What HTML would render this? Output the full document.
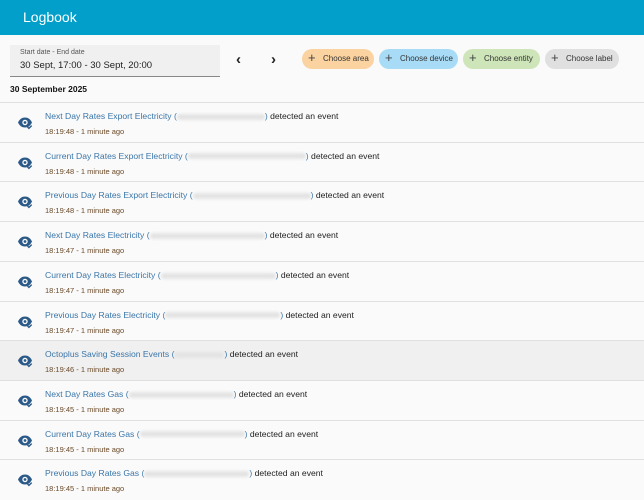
<!DOCTYPE html>
<html><head><style>
body{margin:0;width:644px;height:500px;overflow:hidden;background:#fafafa;font-family:"Liberation Sans",sans-serif;}
.hdr{height:35px;background:#039fcb;color:#fff;font-size:14px;line-height:35px;padding-left:23px;}
.df{position:absolute;left:10px;top:45px;width:210px;height:31px;background:#f0f0f0;border-bottom:1px solid #888;}
.df .l{position:absolute;left:10px;top:4px;font-size:7px;color:#555;}
.df .v{position:absolute;left:10px;top:15px;font-size:9.5px;color:#222;}
.arr{position:absolute;top:51px;font-size:15px;color:#222;font-weight:bold;}
.chip{position:absolute;top:49px;height:20px;border-radius:10px;font-size:8px;color:#333;line-height:20px;padding-left:21px;box-sizing:border-box;white-space:nowrap;}
.chip:before{content:"+";position:absolute;left:6px;top:-1px;font-size:13px;color:#444;}
.date{position:absolute;left:10px;top:84px;font-size:8.5px;font-weight:bold;color:#111;}
.row{position:absolute;left:0;width:644px;height:39px;border-top:1px solid #e0e0e0;}
.row.hl{background:#f0f0f0;}
.t{position:absolute;left:45px;top:8px;font-size:8.6px;color:#222;white-space:nowrap;}
.t a{color:#3a75a8;}
.b{display:inline-block;height:6px;background:#e4e4e4;border-radius:3px;vertical-align:middle;filter:blur(1.2px);}
.s{position:absolute;left:45px;top:24px;font-size:7.5px;color:#6b4b2a;}
.ic{position:absolute;left:17px;top:13px;}
</style></head><body>
<div class="hdr">Logbook</div>
<div class="df"><div class="l">Start date - End date</div><div class="v">30 Sept, 17:00 - 30 Sept, 20:00</div></div>
<div class="arr" style="left:236px">‹</div><div class="arr" style="left:271px">›</div>
<div class="chip" style="left:302px;width:72px;background:#fbd3a0">Choose area</div>
<div class="chip" style="left:379px;width:79px;background:#a8dcf6">Choose device</div>
<div class="chip" style="left:463px;width:77px;background:#cde5b8">Choose entity</div>
<div class="chip" style="left:545px;width:74px;background:#e0e0e0">Choose label</div>
<div class="date">30 September 2025</div>
<div id="rows"></div>
<script>
var d=[["Next Day Rates Export Electricity",88,"18:19:48"],["Current Day Rates Export Electricity",118,"18:19:48"],["Previous Day Rates Export Electricity",118,"18:19:48"],["Next Day Rates Electricity",115,"18:19:47"],["Current Day Rates Electricity",115,"18:19:47"],["Previous Day Rates Electricity",115,"18:19:47"],["Octoplus Saving Session Events",50,"18:19:46"],["Next Day Rates Gas",105,"18:19:45"],["Current Day Rates Gas",105,"18:19:45"],["Previous Day Rates Gas",105,"18:19:45"]];
var h="";
var ic='<svg class="ic" width="16" height="14" viewBox="0 0 16 14"><path d="M1 6.5C2.7 3 5 1.5 8 1.5s5.3 1.5 7 5C13.3 10 11 11.5 8 11.5S2.7 10 1 6.5z" fill="#2c5a88"/><circle cx="8" cy="6.5" r="2.7" fill="#fff"/><circle cx="8" cy="6.5" r="1.4" fill="#2c5a88"/><path d="M10.5 11l1.4 1.4 2.8-2.8" stroke="#2c5a88" stroke-width="1.4" fill="none"/></svg>';
d.forEach(function(r,i){var top=102+i*39.7;
h+='<div class="row'+(i==6?' hl':'')+'" style="top:'+top+'px">'+ic+'<div class="t"><a>'+r[0]+' (</a><span class="b" style="width:'+r[1]+'px"></span><a>)</a> detected an event</div><div class="s">'+r[2]+' - 1 minute ago</div></div>';});
document.getElementById("rows").innerHTML=h;
</script>
</body></html>
